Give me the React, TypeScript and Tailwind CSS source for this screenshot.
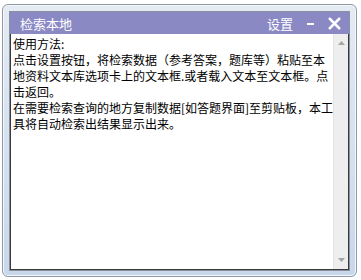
import { X } from 'lucide-react';

const lines = [
  '使用方法:',
  '点击设置按钮，将检索数据（参考答案，题库等）粘贴至本',
  '地资料文本库选项卡上的文本框.或者载入文本至文本框。点',
  '击返回。',
  '在需要检索查询的地方复制数据[如答题界面]至剪贴板，本工',
  '具将自动检索出结果显示出来。',
];

export default function App() {
  return (
    <div className="w-[361px] h-[280px] bg-white pl-[2px] pt-[4px]">
      <div className="w-[355px] h-[273px] rounded-[6px] border border-[#8e99a6] bg-gradient-to-b from-[#e4ebf3] to-[#c8d8ea] shadow-[inset_0_0_0_1px_#f4f8fc] pt-[6px] px-[6px] pb-[5px] flex flex-col">
        <div className="flex-1 flex flex-col border border-[#8a90a0]">
          <div className="h-[22px] bg-[#8b89c4] flex items-center pl-[10px] pr-[5px] text-white text-[13px] font-['Noto_Sans_CJK_SC',sans-serif]">
            <span className="flex-1 leading-none">检索本地</span>
            <span className="leading-none">设置</span>
            <span className="ml-[14px] w-[7px] h-[2px] bg-white mt-[2px]" />
            <X className="ml-[11px] w-[19px] h-[19px]" strokeWidth={3.2} />
          </div>
          <div className="flex-1 flex bg-white border-l border-b border-r border-[#3a3a3a] min-h-0">
            <div className="flex-1 pl-[2px] pt-[2px] text-[12px] leading-[16px] text-black font-['Noto_Sans_CJK_SC',sans-serif]">
              {lines.map((l, i) => (
                <div key={i} className="whitespace-nowrap">{l}</div>
              ))}
            </div>
            <div className="w-[17px] bg-[#eeeeee] border-l border-[#e4e4e4] flex flex-col justify-between items-center py-[7px]">
              <svg width="7" height="4" viewBox="0 0 7 4"><path d="M3.5 0L7 4H0z" fill="#a4a4a4" /></svg>
              <svg width="7" height="4" viewBox="0 0 7 4"><path d="M0 0H7L3.5 4z" fill="#a4a4a4" /></svg>
            </div>
          </div>
        </div>
      </div>
    </div>
  );
}
